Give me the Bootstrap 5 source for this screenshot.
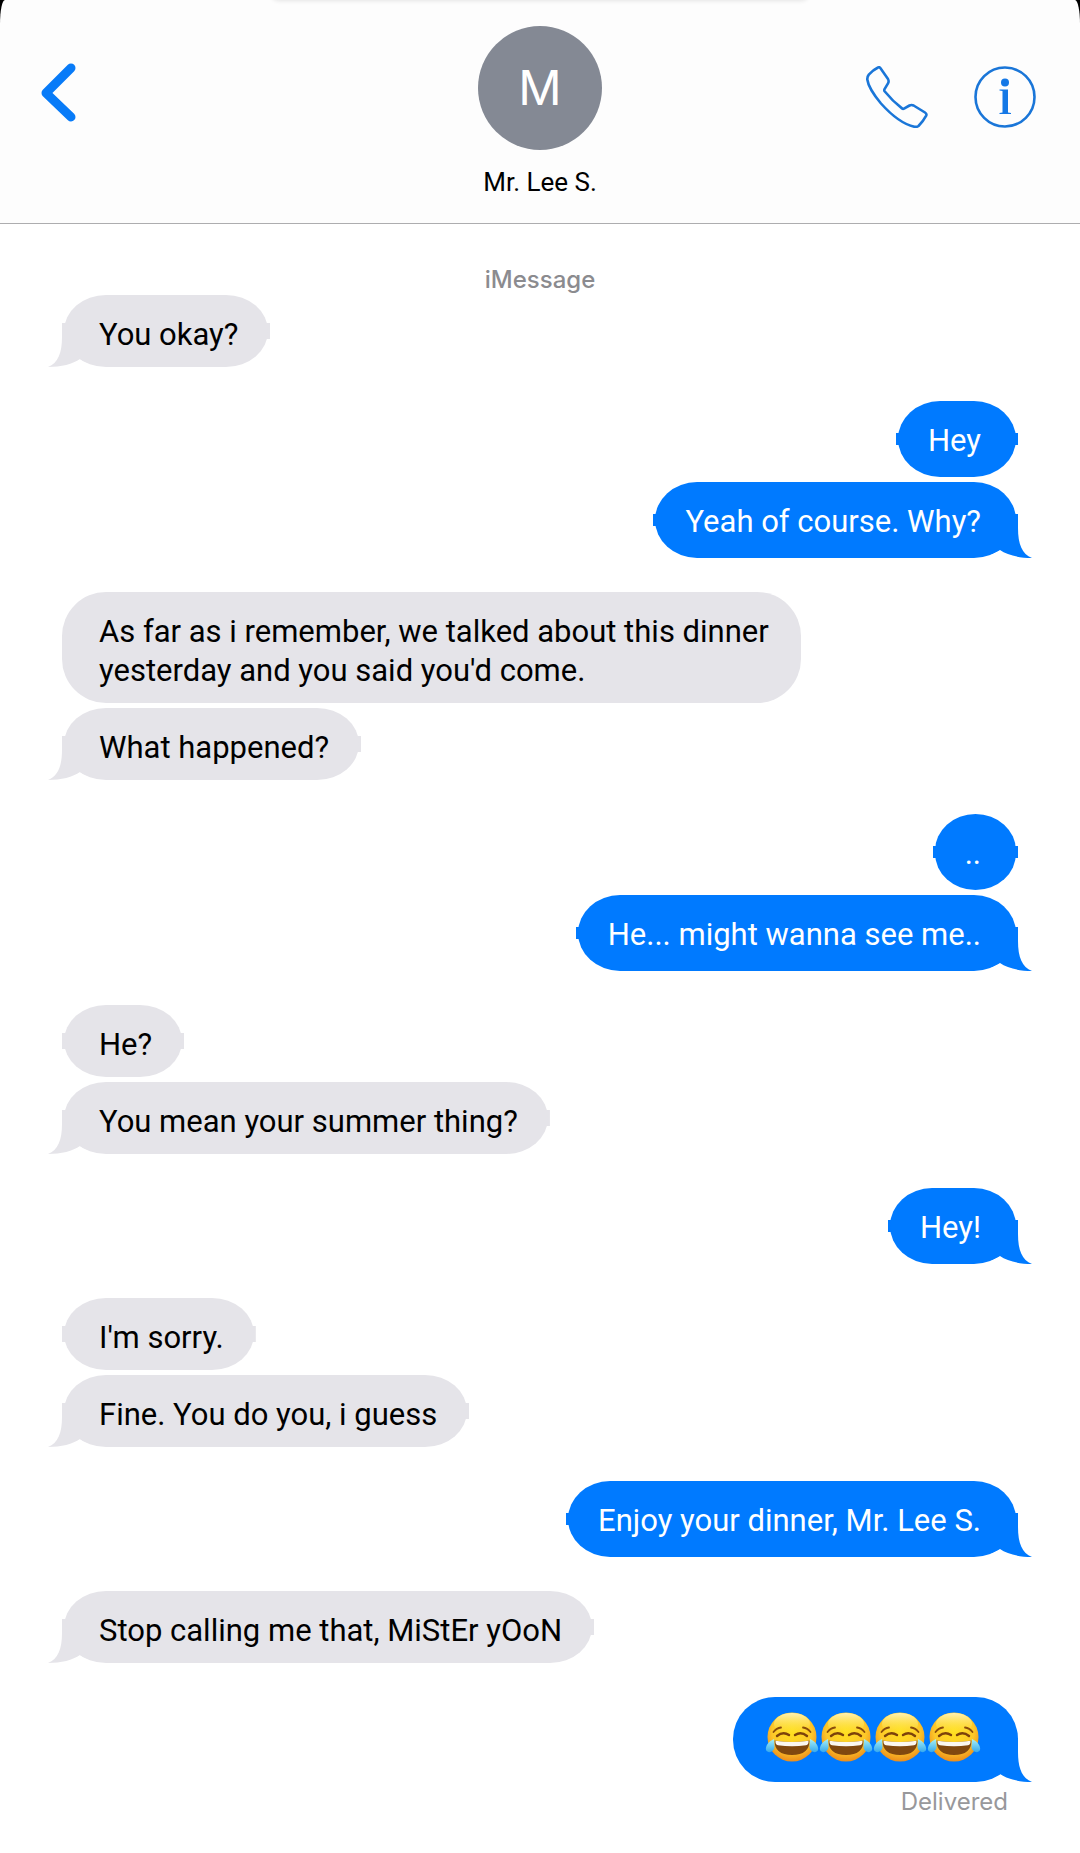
<!DOCTYPE html>
<html lang="en">
<head>
<meta charset="utf-8">
<meta name="viewport" content="width=device-width, initial-scale=1">
<title>Mr. Lee S.</title>
<link href="https://cdn.jsdelivr.net/npm/bootstrap@5.3.0/dist/css/bootstrap.min.css" rel="stylesheet">
<style>
  body { font-family: Roboto, "Liberation Sans", sans-serif; color: #000; background: #fff; }
  .screen-top { background: #000; }
  .chat-header { background: #fdfdfd; border-bottom: 1px solid #adadaf; border-radius: 5px 5px 0 0 / 24px 24px 0 0; padding: 26px 44px 25px; overflow: hidden; }
  .chat-header::before { content: ""; position: absolute; top: -20px; left: 25%; right: 25%; height: 20px; border-radius: 20px; box-shadow: 0 0 4px 1px rgba(0, 0, 0, .1); }
  .side { flex: 1 1 0; }
  .icon-btn { line-height: 0; color: #087bf5; }
  .back { margin: 36px 0 0 -3px; }
  .actions { margin-top: 40px; gap: 46px; }
  .avatar { width: 124px; height: 124px; background: #848994; font-family: Inter, sans-serif; font-size: 48px; font-weight: 400; }
  .contact { font-size: 26px; line-height: 32px; margin-top: 16px; }
  .chat { padding: 41px 62px; }
  .service { font-family: Inter, sans-serif; font-size: 24px; line-height: 30px; font-weight: 500; color: #8b8b8f; }
  .thread { gap: 34px; }
  .turn { gap: 5px; }
  .bubble { --fill: #e5e4e9; --nub: 16px; position: relative; isolation: isolate; max-width: 79%; font-size: 31px; line-height: 39px; padding: 20px 32px 13px 37px; background: linear-gradient(var(--fill), var(--fill)) center / 100% var(--nub) no-repeat; }
  .bubble::before { content: ""; position: absolute; inset: 0 2px; z-index: -1; border-radius: 42px / 36px; background: var(--fill); }
  .bubble.sent { --fill: #007aff; --nub: 12px; color: #fff; padding: 20px 37px 17px 32px; }
  .bubble.sent::before { border-radius: 42px / 38px; }
  .bubble.tall { background: none; }
  .bubble.tall::before { inset: 0; border-radius: 44px; }
  .bubble.sent.tall::before { border-radius: 42px; }
  .tail { position: absolute; bottom: 0; left: -14px; width: 40px; height: 44px; z-index: -1; fill: var(--fill); }
  .sent .tail { left: auto; right: -14px; transform: scaleX(-1); }
  .bubble.sent.emoji-line { padding-top: 14px; padding-bottom: 19px; }
  .joy { display: block; width: 54px; height: 52px; }
  .status { font-family: Inter, sans-serif; font-size: 24px; line-height: 30px; font-weight: 400; color: #98989b; margin-top: 5px; padding-right: 10px; }
</style>
</head>
<body>
<svg width="0" height="0" class="position-absolute" aria-hidden="true">
  <defs>
    <symbol id="tail" viewBox="0 0 40 44"><path d="M14 0V14C14 30 10 40 0 44C13 44 25 41 32 36L40 40V0Z"/></symbol>
    <radialGradient id="face" cx=".5" cy=".38" r=".62"><stop offset="0" stop-color="#ffe01f"/><stop offset=".65" stop-color="#fdc829"/><stop offset="1" stop-color="#ec8d1c"/></radialGradient>
    <linearGradient id="shine" x1="0" y1="0" x2="0" y2="1"><stop offset="0" stop-color="#fff3b4"/><stop offset="1" stop-color="#ffe52e" stop-opacity="0"/></linearGradient>
    <linearGradient id="tear" x1="0" y1="0" x2="0" y2="1"><stop offset="0" stop-color="#a8f0f5"/><stop offset="1" stop-color="#35a9ee"/></linearGradient>
    <symbol id="joy" viewBox="0 0 54 52">
      <circle cx="27" cy="26" r="24.5" fill="url(#face)"/>
      <ellipse cx="27" cy="13" rx="18" ry="11" fill="url(#shine)"/>
      <path d="M8.500 21q3-4 7.500-4.500M45.500 21q-3-4-7.500-4.500" fill="none" stroke="#8a4d0c" stroke-width="1.800" stroke-linecap="round"/>
      <path d="M12 25q6-5 12-1M42 25q-6-5-12-1" fill="none" stroke="#7c420b" stroke-width="2.400" stroke-linecap="round"/>
      <path d="M9.500 29.500q17.500 3 35 0q0 14.500-17.500 14.500T9.500 29.500Z" fill="#80480f"/>
      <path d="M10.500 29.700q16.500 2.600 33 0q.5 3.500-2.500 4.600q-14 2-28 0q-3-1.100-2.500-4.600Z" fill="#fbf7f0"/>
      <path d="M9 28C4 30 0 35 1 39c2 4 8 2 8.500-3Z" fill="url(#tear)"/>
      <path d="M45 28c5 2 9 7 8 11c-2 4-8 2-8.500-3Z" fill="url(#tear)"/>
    </symbol>
  </defs>
</svg>

<div class="screen-top">
  <header class="chat-header d-flex align-items-start position-relative">
    <div class="side">
      <button type="button" class="icon-btn back btn p-0 border-0" aria-label="Back">
        <svg width="38" height="60" viewBox="0 0 38 60" fill="none" stroke="#087bf8" stroke-width="9" stroke-linecap="round" stroke-linejoin="round"><path d="M30 6L5 31L30 55"/></svg>
      </button>
    </div>
    <div class="text-center">
      <div class="avatar rounded-circle text-white d-flex align-items-center justify-content-center mx-auto">M</div>
      <h1 class="contact fw-normal mb-0">Mr. Lee S.</h1>
    </div>
    <div class="side actions d-flex justify-content-end">
      <button type="button" class="icon-btn btn p-0 border-0" aria-label="Call">
        <svg width="62" height="62" viewBox="0 0 62 62" fill="none" stroke="#1a76d8" stroke-width="2.6" stroke-linejoin="round"><path d="M12 1.500Q13.500 .8 14.500 2.200L22 13Q23.200 15.200 22 17.300L18.400 23.400Q18 24.400 18.600 25.200Q26.500 35 36 42.400Q37 43.200 38 42.600L43.500 39.500Q45.600 38.400 47.600 39.500L59 46.500Q61 47.800 60.200 49.600Q57 55.500 52.500 60Q51 61.200 48.500 60.800Q33 57.500 15 37.500Q2.500 22.500 1.300 13.500Q1.200 10.500 2.800 8.600Q7 4 12 1.500Z"/></svg>
      </button>
      <button type="button" class="icon-btn btn p-0 border-0" aria-label="Details">
        <svg width="62" height="62" viewBox="0 0 62 62"><circle cx="31" cy="31" r="29.500" fill="none" stroke="#1a76d8" stroke-width="2.600"/><circle cx="31" cy="16.500" r="4" fill="#1478e6"/><path d="M25.500 23.500H34V46.500L37 47V48H25.500V47L28.500 46.500V25L25.500 24.500Z" fill="#1478e6"/></svg>
      </button>
    </div>
  </header>
</div>

<main class="chat">
  <div class="service text-center">iMessage</div>
  <div class="thread d-flex flex-column">
    <section class="turn d-flex flex-column align-items-start">
      <div class="bubble"><svg class="tail" aria-hidden="true"><use href="#tail"/></svg>You okay?</div>
    </section>
    <section class="turn d-flex flex-column align-items-end">
      <div class="bubble sent">Hey</div>
      <div class="bubble sent"><svg class="tail" aria-hidden="true"><use href="#tail"/></svg>Yeah of course. Why?</div>
    </section>
    <section class="turn d-flex flex-column align-items-start">
      <div class="bubble tall">As far as i remember, we talked about this dinner<br>yesterday and you said you'd come.</div>
      <div class="bubble"><svg class="tail" aria-hidden="true"><use href="#tail"/></svg>What happened?</div>
    </section>
    <section class="turn d-flex flex-column align-items-end">
      <div class="bubble sent">..</div>
      <div class="bubble sent"><svg class="tail" aria-hidden="true"><use href="#tail"/></svg>He... might wanna see me..</div>
    </section>
    <section class="turn d-flex flex-column align-items-start">
      <div class="bubble">He?</div>
      <div class="bubble"><svg class="tail" aria-hidden="true"><use href="#tail"/></svg>You mean your summer thing?</div>
    </section>
    <section class="turn d-flex flex-column align-items-end">
      <div class="bubble sent"><svg class="tail" aria-hidden="true"><use href="#tail"/></svg>Hey!</div>
    </section>
    <section class="turn d-flex flex-column align-items-start">
      <div class="bubble">I'm sorry.</div>
      <div class="bubble"><svg class="tail" aria-hidden="true"><use href="#tail"/></svg>Fine. You do you, i guess</div>
    </section>
    <section class="turn d-flex flex-column align-items-end">
      <div class="bubble sent"><svg class="tail" aria-hidden="true"><use href="#tail"/></svg>Enjoy your dinner, Mr. Lee S.</div>
    </section>
    <section class="turn d-flex flex-column align-items-start">
      <div class="bubble"><svg class="tail" aria-hidden="true"><use href="#tail"/></svg>Stop calling me that, MiStEr yOoN</div>
    </section>
    <section class="d-flex flex-column align-items-end">
      <div class="bubble sent tall emoji-line d-flex" role="img" aria-label="Four faces with tears of joy">
        <svg class="tail" aria-hidden="true"><use href="#tail"/></svg>
        <svg class="joy"><use href="#joy"/></svg><svg class="joy"><use href="#joy"/></svg><svg class="joy"><use href="#joy"/></svg><svg class="joy"><use href="#joy"/></svg>
      </div>
      <div class="status">Delivered</div>
    </section>
  </div>
</main>
<script src="https://cdn.jsdelivr.net/npm/bootstrap@5.3.0/dist/js/bootstrap.bundle.min.js"></script>
</body>
</html>
